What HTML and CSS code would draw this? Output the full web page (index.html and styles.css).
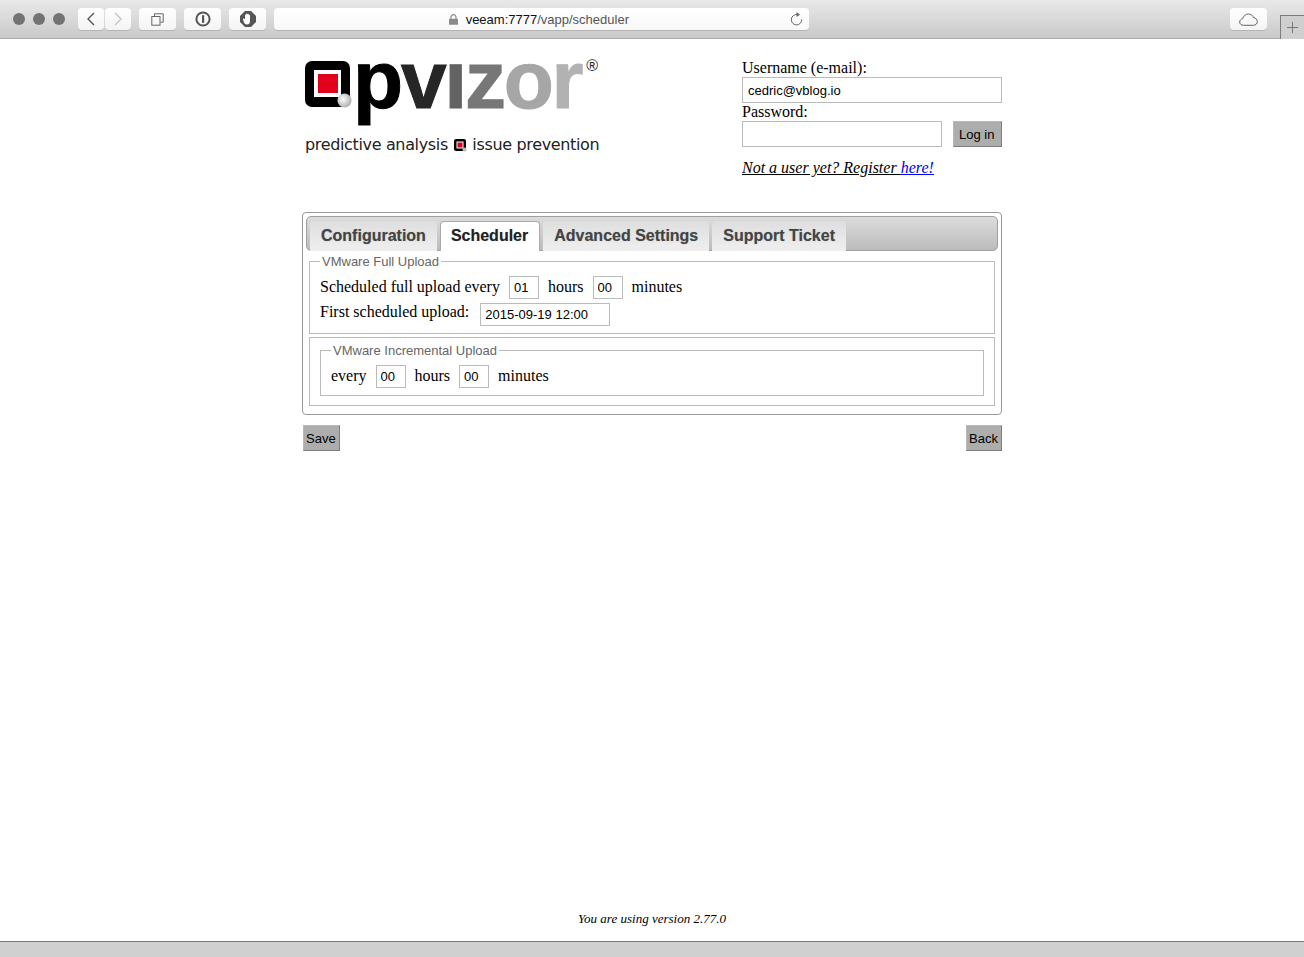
FILE: index.html
```html
<!DOCTYPE html>
<html lang="en">
<head>
<meta charset="UTF-8">
<title>opvizor - Scheduler</title>
<link rel="stylesheet" href="styles.css">
</head>
<body>
<div class="toolbar">
  <div class="dots"><span class="dot"></span><span class="dot"></span><span class="dot"></span></div>
  <div class="nav-pair">
    <span class="tool tool-half">
      <svg width="10" height="14" viewBox="0 0 10 14"><path d="M8 1 2 7l6 6" fill="none" stroke="#555" stroke-width="1.4"/></svg>
    </span>
    <span class="tool tool-half">
      <svg width="10" height="14" viewBox="0 0 10 14"><path d="M2 1l6 6-6 6" fill="none" stroke="#c4c4c4" stroke-width="1.4"/></svg>
    </span>
  </div>
  <span class="tool tool-wide">
    <svg width="13" height="13" viewBox="0 0 13 13"><path d="M3.5 3V.8h8.7v8.4H9.5" fill="none" stroke="#666"/><rect x=".8" y="3.5" width="8.2" height="8.7" fill="none" stroke="#666"/></svg>
  </span>
  <span class="tool tool-wide">
    <svg width="16" height="16" viewBox="0 0 16 16"><circle cx="8" cy="8" r="6.6" fill="none" stroke="#555" stroke-width="2"/><rect x="7" y="4" width="2.2" height="8" rx=".8" fill="#555"/></svg>
  </span>
  <span class="tool tool-wide">
    <svg width="16" height="16" viewBox="0 0 16 16"><path d="M5 0h6l5 5v6l-5 5H5l-5-5V5z" fill="#555"/><path d="M5 8V4.2c0-1 1.200-1 1.200 0V7V3.200c0-1 1.300-1 1.300 0V7V3.400c0-1 1.300-1 1.300 0V7.500V4.600c0-1 1.200-1 1.200 0v5.600c0 2-1.200 3.300-3 3.300-1.600 0-2.400-.8-3.100-2.200L3 8.500c-.4-1 .8-1.500 1.300-.6z" fill="#fff"/></svg>
  </span>
  <div class="address">
    <span class="address-text">
      <svg class="lock" width="9" height="11" viewBox="0 0 9 11"><path d="M2 5V3.200a2.500 2.500 0 0 1 5 0V5" fill="none" stroke="#8a8a8a" stroke-width="1.200"/><rect y="4.800" width="9" height="6" rx=".6" fill="#8a8a8a"/></svg>
      <span class="host">veeam:7777</span><span class="url-path">/vapp/scheduler</span>
    </span>
    <svg class="reload" width="13" height="14" viewBox="0 0 13 14"><path d="M7.500 2.600A5.200 5.200 0 1 0 11.700 7.500" fill="none" stroke="#666" stroke-width="1"/><path d="M6.500 0l3.500 2.700L6.500 5z" fill="#666"/></svg>
  </div>
  <span class="tool tool-wide tool-cloud">
    <svg width="19" height="13" viewBox="0 0 19 13"><path d="M4.500 12.300C2.300 12.300.7 10.900.7 9c0-1.700 1.200-3 2.900-3.200C4.200 3.200 6.500 1 9.400 1c2.500 0 4.400 1.500 5.100 3.600 2.200.2 3.800 1.900 3.800 3.900 0 2.200-1.700 3.800-4 3.800z" fill="none" stroke="#666"/></svg>
  </span>
  <span class="new-tab">
    <svg width="11" height="11" viewBox="0 0 11 11"><path d="M5.500 0v11M0 5.500h11" stroke="#777"/></svg>
  </span>
</div>

<div class="page">
  <div class="wrap">
    <div class="header">
      <div class="logo">
        <div class="logo-top">
          <svg class="logo-mark" width="47" height="48" viewBox="0 0 47 48">
            <defs>
              <radialGradient id="ball" cx="40%" cy="40%" r="65%"><stop offset="0" stop-color="#fff"/><stop offset="1" stop-color="#aaa"/></radialGradient>
            </defs>
            <rect x="0" y="0" width="45" height="46" rx="7" fill="#000"/>
            <rect x="9" y="9" width="27" height="27" fill="#fff"/>
            <rect x="13" y="13" width="20" height="19" fill="#e2001a"/>
            <circle cx="39.500" cy="39.500" r="7" fill="url(#ball)"/>
          </svg>
          <span class="wordmark"><span class="l1">p</span><span class="l2">v</span><span class="l3">ı</span><span class="l4">z</span><span class="l5">o</span><span class="l6">r</span></span>
          <span class="reg">®</span>
        </div>
        <div class="tagline">
          predictive analysis
          <svg class="tag-mark" width="13" height="13" viewBox="0 0 13 13"><rect width="12" height="12" rx="2" fill="#000"/><rect x="2.500" y="2.500" width="7" height="7" fill="#fff"/><rect x="3.500" y="3.500" width="5" height="5" fill="#e2001a"/><circle cx="10.500" cy="10.500" r="2" fill="#bbb"/></svg>
          issue prevention
        </div>
      </div>
      <form class="login">
        <label class="login-label">Username (e-mail):</label>
        <input class="text-input login-input" type="text" value="cedric@vblog.io">
        <label class="login-label">Password:</label>
        <div class="login-row">
          <input class="text-input password-input" type="password">
          <button class="btn" type="button">Log in</button>
        </div>
        <p class="register">Not a user yet? Register <a href="#">here!</a></p>
      </form>
    </div>

    <div class="panel">
      <ul class="tabs">
        <li class="tab">Configuration</li>
        <li class="tab active">Scheduler</li>
        <li class="tab">Advanced Settings</li>
        <li class="tab">Support Ticket</li>
      </ul>
      <fieldset class="group">
        <legend>VMware Full Upload</legend>
        <div class="row">Scheduled full upload every <input class="text-input num first" type="text" value="01"> hours <input class="text-input num" type="text" value="00"> minutes</div>
        <div class="row row-date">First scheduled upload: <input class="text-input date" type="text" value="2015-09-19 12:00"></div>
      </fieldset>
      <div class="outer-group">
        <fieldset class="group group-inner">
          <legend>VMware Incremental Upload</legend>
          <div class="row">every <input class="text-input num first" type="text" value="00"> hours <input class="text-input num" type="text" value="00"> minutes</div>
        </fieldset>
      </div>
    </div>

    <div class="actions">
      <button class="btn" type="button">Save</button>
      <button class="btn" type="button">Back</button>
    </div>
  </div>
  <p class="version">You are using version 2.77.0</p>
</div>
<div class="statusbar"></div>
</body>
</html>
```

FILE: styles.css
```css
* {
  box-sizing: border-box;
}
html, body {
  height: 100%;
}
body {
  margin: 0;
  display: flex;
  flex-direction: column;
  background: #fff;
  color: #000;
  font-family: "Liberation Serif", serif;
  font-size: 16px;
  overflow: hidden;
}

/* browser chrome */
.toolbar {
  height: 39px;
  flex: none;
  display: flex;
  align-items: flex-start;
  padding: 8px 37px 0 13px;
  position: relative;
  background: linear-gradient(#e9e9e9, #c9c9c9);
  border-bottom: 1px solid #a8a8a8;
}
.dots {
  display: flex;
  gap: 8px;
  margin: 5px 0 0;
}
.dot {
  width: 12px;
  height: 12px;
  border-radius: 50%;
  background: #737373;
}
.nav-pair {
  display: flex;
  gap: 1px;
  margin: 0 8px 0 13px;
}
.tool {
  height: 22px;
  display: flex;
  align-items: center;
  justify-content: center;
  background: linear-gradient(#fff, #f4f4f4);
  border-radius: 4px;
  box-shadow: 0 1px 0 #b4b4b4;
}
.tool-half {
  width: 26px;
}
.tool-wide {
  width: 37px;
  margin-right: 8px;
}
.tool-cloud {
  margin: 0;
}
.address {
  width: 535px;
  height: 22px;
  margin-right: auto;
  padding: 0 6px 0 0;
  display: flex;
  align-items: center;
  background: linear-gradient(#fff, #f8f8f8);
  border-radius: 4px;
  box-shadow: 0 1px 0 #b4b4b4;
  font-family: "Liberation Sans", sans-serif;
  font-size: 13px;
}
.address-text {
  flex: 1;
  text-align: center;
  padding-left: 14px;
}
.lock {
  margin-right: 4px;
  vertical-align: -1px;
}
.host {
  color: #111;
}
.url-path {
  color: #555;
}
.new-tab {
  position: absolute;
  right: 0;
  bottom: -1px;
  width: 24px;
  height: 24px;
  display: flex;
  align-items: center;
  justify-content: center;
  background: #cfcfcf;
  border: 1px solid #7d7d7d;
  border-width: 1px 0 0 1px;
}

.page {
  flex: 1;
  display: flex;
  flex-direction: column;
  align-items: center;
}
.wrap {
  width: 700px;
}

/* header */
.header {
  height: 173px;
  display: flex;
  justify-content: space-between;
}
.logo {
  padding: 11px 0 0 3px;
}
.logo-top {
  display: flex;
  align-items: flex-start;
  height: 78px;
}
.logo-mark {
  margin-top: 11px;
}
.wordmark {
  margin: -9px 0 0 1px;
  font-family: "Liberation Sans", sans-serif;
  font-weight: bold;
  font-size: 82px;
  line-height: 78px;
  letter-spacing: -2.2px;
  -webkit-text-stroke: 1px currentColor;
}
.l1 { color: #000; }
.l2 { color: #262626; }
.l3 { color: #636363; }
.l4 { color: #777; }
.l5 { color: #a6a6a6; }
.l6 { color: #b2b2b2; }
.reg {
  margin: 7px 0 0 5px;
  font-family: "Liberation Sans", sans-serif;
  font-size: 16px;
  line-height: 18px;
  color: #222;
}
.tagline {
  margin-top: 7px;
  font-family: "DejaVu Sans", sans-serif;
  font-size: 16px;
  line-height: 20px;
  letter-spacing: -.35px;
  color: #222;
  white-space: nowrap;
}
.tag-mark {
  vertical-align: -2px;
  margin: 0 1px;
}
.login {
  width: 260px;
  padding-top: 20px;
  margin: 0;
}
.login-label {
  display: block;
  height: 18px;
  line-height: 18px;
}
.login-input {
  width: 260px;
  height: 26px;
  display: block;
  padding-bottom: 3px;
}
.login-row {
  display: flex;
  justify-content: space-between;
}
.password-input {
  width: 200px;
  height: 26px;
}
.register {
  margin: 12px 0 0;
  font-style: italic;
  font-size: 16px;
  line-height: 18px;
  text-decoration: underline;
}
.register a {
  color: #0000ee;
}

.text-input {
  padding: 0 5px;
  border: 1px solid #bbb;
  border-radius: 0;
  outline: 0;
  background: #fff;
  color: #000;
  font-family: "Liberation Sans", sans-serif;
  font-size: 13px;
}
.btn {
  height: 26px;
  padding: 0 3px 0 2px;
  background: #adadad;
  border: 1px solid #b8b8b8;
  border-right-color: #7d7d7d;
  border-bottom-color: #7d7d7d;
  border-radius: 0;
  color: #000;
  font-family: "Liberation Sans", sans-serif;
  font-size: 13px;
}
.login-row .btn {
  width: 49px;
  padding-left: 5px;
  text-align: left;
}

/* panel with tabs */
.panel {
  height: 203px;
  padding: 3px;
  border: 1px solid #999;
  border-radius: 4px;
}
.tabs {
  height: 35px;
  margin: 0 0 3px;
  padding: 4px 0 0 3px;
  display: flex;
  gap: 3px;
  list-style: none;
  background: linear-gradient(#dcdcdc, #bcbcbc);
  border: 1px solid #a0a0a0;
  border-radius: 5px;
}
.tab {
  height: 30px;
  padding: 0 11px;
  background: linear-gradient(#dedede, #efefef);
  border-radius: 4px 4px 0 0;
  font-family: "Liberation Sans", sans-serif;
  font-weight: bold;
  font-size: 16px;
  line-height: 29px;
  color: #444;
  text-shadow: 0 0 1px rgba(68, 68, 68, .4);
}
.tab.active {
  background: #fff;
  color: #222;
  border: 1px solid #aaa;
  border-bottom: 0;
  padding: 0 11px 0 10px;
  line-height: 27px;
}
.group {
  height: 80px;
  margin: 0 3px;
  padding: 7px 10px 0;
  border: 1px solid #bbb;
}
.group legend {
  padding: 0 2px;
  font-family: "Liberation Sans", sans-serif;
  font-size: 13px;
  line-height: 15px;
  color: #666;
}
.row {
  height: 26px;
  white-space: nowrap;
}
.row-date {
  height: 24px;
  margin-top: 1px;
}
.num {
  width: 30px;
  height: 23px;
  margin: 0 5px;
  padding: 0 4px;
}
.num.first {
  margin-left: 5px;
}
.date {
  width: 130px;
  height: 23px;
  margin-left: 7px;
  padding: 0 4px;
  vertical-align: -2px;
}
.outer-group {
  height: 69px;
  margin: 3px 3px 0;
  padding: 5px 10px 0;
  border: 1px solid #bbb;
}
.group-inner {
  height: 53px;
  margin: 0;
}

.actions {
  margin-top: 10px;
  display: flex;
  justify-content: space-between;
  padding-left: 1px;
}

.version {
  margin: auto 0 15px;
  font-style: italic;
  font-size: 13px;
  line-height: 15px;
}
.statusbar {
  height: 16px;
  flex: none;
  background: #d0d0d0;
  border-top: 1px solid #7a7a7a;
}
```
